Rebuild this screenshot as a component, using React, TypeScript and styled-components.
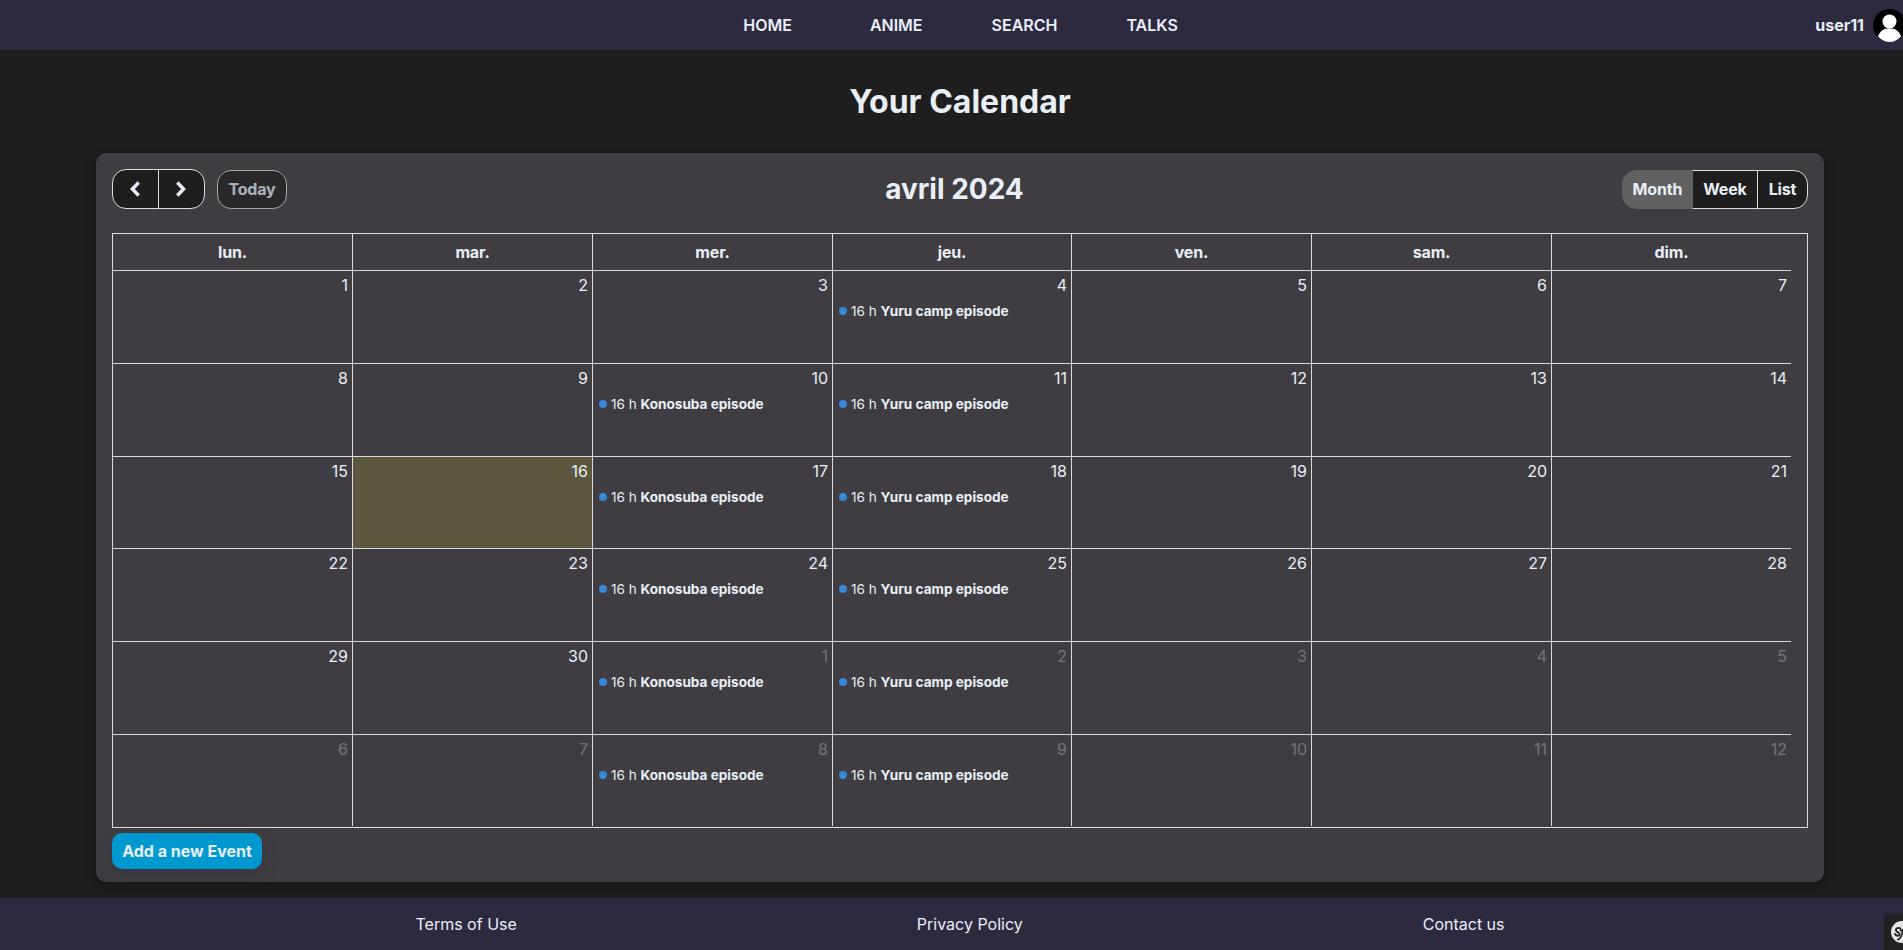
import React from "react";
import styled, { createGlobalStyle } from "styled-components";

const GlobalStyle = createGlobalStyle`
  *, *::before, *::after { box-sizing: border-box; }
  html { overflow: hidden; }
  body {
    margin: 0;
    background: #1e1e1e;
    color: #e8eff7;
    font: 400 16px/24px Inter, "Liberation Sans", sans-serif;
  }
`;

const Page = styled.div`
  width: 1920px;
  height: 950px;
  display: flex;
  flex-direction: column;
`;

const Header = styled.header`
  height: 50px;
  flex: none;
  background: #2d2a40;
  display: grid;
  grid-template-columns: 1fr auto 1fr;
  align-items: center;
  font-weight: 600;
`;

const Nav = styled.nav`
  grid-column: 2;
  display: flex;
  padding-left: 1px;
`;

const NavLink = styled.a<{ $gap?: number }>`
  margin-left: ${(p) => p.$gap ?? 0}px;
`;

const User = styled.div`
  justify-self: end;
  display: flex;
  align-items: center;
  gap: 9px;
  padding-right: 14px;
  font-weight: 700;
`;

const Avatar = styled.svg`
  display: block;
  width: 33px;
  height: 33px;
`;

const Title = styled.h1`
  margin: 32px 0 31px;
  text-align: center;
  font-size: 32px;
  line-height: 40px;
  font-weight: 700;
`;

const Card = styled.main`
  margin: 0 96px;
  height: 729px;
  padding: 16px;
  border-radius: 10px;
  background: #3f3d42;
  box-shadow: 0 4px 12px rgba(0, 0, 0, 0.3);
`;

const Toolbar = styled.div`
  height: 40px;
  margin-bottom: 24px;
  display: flex;
  justify-content: space-between;
  align-items: center;
`;

const ToolbarSide = styled.div`
  display: flex;
  align-items: flex-end;
  gap: 12px;
  height: 40px;
`;

const MonthName = styled.h2`
  margin: 0;
  font-size: 28px;
  line-height: 40px;
  font-weight: 700;
`;

const ButtonGroup = styled.div`
  display: flex;
`;

const Button = styled.button<{ $w: number; $h?: number; $active?: boolean; $muted?: boolean }>`
  position: relative;
  z-index: ${(p) => (p.$active ? 1 : 0)};
  width: ${(p) => p.$w}px;
  height: ${(p) => p.$h ?? 39}px;
  padding: 0 0 1px;
  display: flex;
  align-items: center;
  justify-content: center;
  font: inherit;
  font-weight: 700;
  letter-spacing: -0.15px;
  color: inherit;
  border: 1px solid ${(p) => (p.$active ? "#616161" : "#dddddd")};
  background: ${(p) => (p.$active ? "#616161" : "#1e1e1e")};
  opacity: ${(p) => (p.$muted ? 0.65 : 1)};
  border-radius: 0;
  &:first-child { border-top-left-radius: 14px; border-bottom-left-radius: 14px; }
  &:last-child { border-top-right-radius: 14px; border-bottom-right-radius: 14px; }
  & + & { margin-left: -1px; }
`;

const Calendar = styled.div`
  border: 1px solid #dddddd;
  height: 595px;
  margin-bottom: 5px;
`;

const columns = "240px 240px 240px 239px 240px 240px 239px";

const WeekDays = styled.div`
  display: grid;
  grid-template-columns: ${columns};
  width: 1678px;
  height: 37px;
`;

const WeekDay = styled.div`
  border-right: 1px solid #dddddd;
  border-bottom: 1px solid #dddddd;
  text-align: center;
  font-weight: 700;
  letter-spacing: -0.15px;
  line-height: 36px;
  &:last-child { border-right: 0; }
`;

const Weeks = styled.div`
  display: grid;
  grid-template-columns: ${columns};
  grid-template-rows: 93px 93px 92px 93px 93px 91px;
  width: 1678px;
`;

const Day = styled.div<{ $today?: boolean; $lastRow?: boolean; $lastCol?: boolean }>`
  border-right: ${(p) => (p.$lastCol ? 0 : 1)}px solid #dddddd;
  border-bottom: ${(p) => (p.$lastRow ? 0 : 1)}px solid #dddddd;
  background: ${(p) => (p.$today ? "#5c563e" : "transparent")};
`;

const DayNumber = styled.div<{ $other: boolean }>`
  padding: 2px 4px 0;
  height: 28px;
  text-align: right;
  opacity: ${(p) => (p.$other ? 0.3 : 1)};
`;

const Event = styled.div`
  display: flex;
  align-items: center;
  height: 24px;
  padding-left: 6px;
  font-size: 13.6px;
  line-height: 20px;
  white-space: nowrap;
`;

const Dot = styled.span`
  width: 8px;
  height: 8px;
  margin-right: 4px;
  border-radius: 50%;
  background: #3788d8;
`;

const EventTitle = styled.span`
  margin-left: 3.6px;
  font-weight: 700;
`;

const AddButton = styled.button`
  display: block;
  width: 150px;
  height: 36px;
  padding: 0;
  border: 0;
  border-radius: 10px;
  background: #0099cf;
  color: inherit;
  font: inherit;
  font-weight: 700;
  box-shadow: 0 8px 16px rgba(45, 42, 64, 0.3);
`;

const Footer = styled.footer`
  position: relative;
  margin-top: 16px;
  height: 52px;
  flex: none;
  background: #2d2a40;
  display: flex;
  justify-content: center;
  gap: 400px;
  align-items: center;
`;

const Badge = styled.div`
  position: absolute;
  right: 0;
  bottom: 0;
  width: 36px;
  height: 36px;
  padding: 7px;
  border-radius: 4px 0 0 0;
  background: #222222;
  svg { display: block; }
`;

const WEEK_DAYS = ["lun.", "mar.", "mer.", "jeu.", "ven.", "sam.", "dim."];

const DAYS = Array.from({ length: 42 }, (_, i) => ({
  number: i < 30 ? i + 1 : i - 29,
  other: i >= 30,
  event: i % 7 === 3 ? "Yuru camp episode" : i % 7 === 2 && i > 6 ? "Konosuba episode" : null,
}));

function Chevron({ flip = false }: { flip?: boolean }) {
  return (
    <svg width="13" height="18" viewBox="0 0 13 18" fill="none" stroke="currentColor" strokeWidth="3.4">
      <path d={flip ? "M2.300 2.500 8.600 9 2.300 15.500" : "M9.700 2.500 3.400 9 9.700 15.500"} />
    </svg>
  );
}

export default function App() {
  return (
    <>
      <GlobalStyle />
      <Page>
        <Header>
          <Nav>
            <NavLink>HOME</NavLink>
            <NavLink $gap={78}>ANIME</NavLink>
            <NavLink $gap={69}>SEARCH</NavLink>
            <NavLink $gap={69}>TALKS</NavLink>
          </Nav>
          <User>
            user11
            <Avatar viewBox="0 0 33 33">
              <circle cx="16.5" cy="16.5" r="16.5" fill="#000" />
              <circle cx="16.5" cy="12.5" r="7" fill="#fff" />
              <path d="M5 27.5C6.500 22.500 10.500 19.200 16.500 19.200S26.500 22.500 28 27.500C25 31 21 33 16.500 33S8 31 5 27.500Z" fill="#fff" />
            </Avatar>
          </User>
        </Header>
        <Title>Your Calendar</Title>
        <Card>
          <Toolbar>
            <ToolbarSide>
              <ButtonGroup>
                <Button $w={47} $h={40} aria-label="Previous"><Chevron /></Button>
                <Button $w={47} $h={40} aria-label="Next"><Chevron flip /></Button>
              </ButtonGroup>
              <ButtonGroup>
                <Button $w={70} $muted>Today</Button>
              </ButtonGroup>
            </ToolbarSide>
            <MonthName>avril 2024</MonthName>
            <ToolbarSide>
              <ButtonGroup>
                <Button $w={71} $active>Month</Button>
                <Button $w={66}>Week</Button>
                <Button $w={51}>List</Button>
              </ButtonGroup>
            </ToolbarSide>
          </Toolbar>
          <Calendar>
            <WeekDays>
              {WEEK_DAYS.map((d) => <WeekDay key={d}>{d}</WeekDay>)}
            </WeekDays>
            <Weeks>
              {DAYS.map((d, i) => (
                <Day key={i} $today={i === 15} $lastRow={i >= 35} $lastCol={i % 7 === 6}>
                  <DayNumber $other={d.other}>{d.number}</DayNumber>
                  {d.event && (
                    <Event>
                      <Dot />
                      <span>16 h</span>
                      <EventTitle>{d.event}</EventTitle>
                    </Event>
                  )}
                </Day>
              ))}
            </Weeks>
          </Calendar>
          <AddButton>Add a new Event</AddButton>
        </Card>
        <Footer>
          <a>Terms of Use</a>
          <a>Privacy Policy</a>
          <a>Contact us</a>
          <Badge>
            <svg width="22" height="22" viewBox="0 0 22 22">
              <circle cx="11" cy="11" r="11" fill="#e6e6e6" />
              <path
                d="M9.500 7.500C7.500 6 4.500 7.500 5 9.500S9 11.500 8.500 13.500 5 15 4 13M7 18.500C9.500 18.500 10.500 15 11.500 11S13.500 4.500 16 5M9.500 9.500H14.500"
                fill="none" stroke="#222" strokeWidth="1.800" strokeLinecap="round"
              />
            </svg>
          </Badge>
        </Footer>
      </Page>
    </>
  );
}
